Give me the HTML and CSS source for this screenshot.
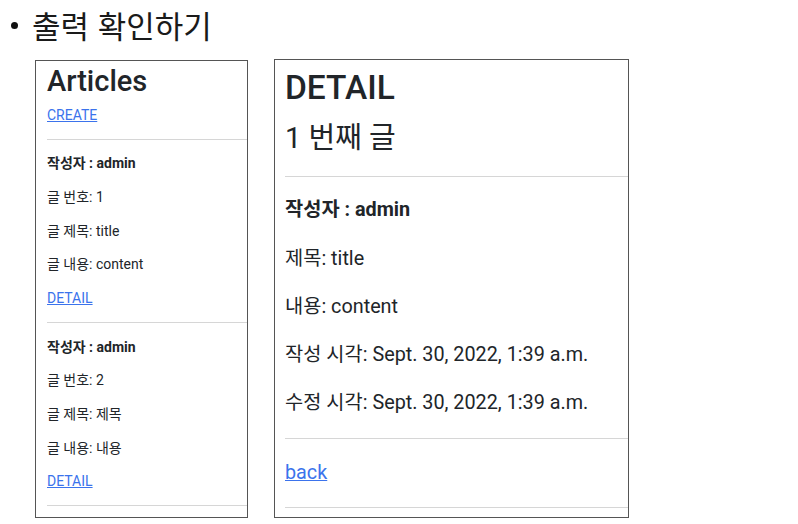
FILE: index.html
```html
<!DOCTYPE html>
<html lang="ko">
<head>
<meta charset="utf-8">
<title>출력 확인하기</title>
<link rel="stylesheet" href="styles.css">
</head>
<body>
<div class="page">
  <div class="title-row">
    <span class="bullet"></span>
    <span class="title">출력 확인하기</span>
  </div>
  <div class="shots">
    <div class="shot shot-list">
      <h1 class="list-h1">Articles</h1>
      <a class="link" href="#">CREATE</a>
      <hr class="rule">
      <p class="line"><b>작성자 : admin</b></p>
      <p class="line">글 번호: 1</p>
      <p class="line">글 제목: title</p>
      <p class="line">글 내용: content</p>
      <a class="link" href="#">DETAIL</a>
      <hr class="rule">
      <p class="line"><b>작성자 : admin</b></p>
      <p class="line">글 번호: 2</p>
      <p class="line">글 제목: 제목</p>
      <p class="line">글 내용: 내용</p>
      <a class="link" href="#">DETAIL</a>
      <hr class="rule">
    </div>
    <div class="shot shot-detail">
      <h1 class="detail-h1">DETAIL</h1>
      <h2 class="detail-h2">1 번째 글</h2>
      <hr class="rule rule-lg">
      <p class="line-lg"><b>작성자 : admin</b></p>
      <p class="line-lg">제목: title</p>
      <p class="line-lg">내용: content</p>
      <p class="line-lg">작성 시각: Sept. 30, 2022, 1:39 a.m.</p>
      <p class="line-lg">수정 시각: Sept. 30, 2022, 1:39 a.m.</p>
      <hr class="rule rule-lg">
      <a class="link" href="#">back</a>
      <hr class="rule rule-lg">
    </div>
  </div>
</div>
</body>
</html>
```
FILE: styles.css
```css
html, body {
  margin: 0;
  padding: 0;
  background: #ffffff;
}

.page {
  width: 798px;
  height: 524px;
  overflow: hidden;
  font-family: Roboto, "Noto Sans CJK KR", sans-serif;
  color: #212529;
}

.title-row {
  display: flex;
  align-items: center;
  height: 50px;
  padding-left: 11px;
}

.bullet {
  width: 7px;
  height: 7px;
  border-radius: 50%;
  background: #111;
  margin-right: 14px;
}

.title {
  font-family: "Noto Sans CJK KR", sans-serif;
  font-size: 31px;
  line-height: 36px;
  color: #1a1a1a;
}

.shots {
  display: flex;
  align-items: flex-start;
  margin-top: 9px;
  padding-left: 35px;
  gap: 26px;
}

.shot {
  box-sizing: border-box;
  border: 1px solid #555;
  overflow: hidden;
  background: #fff;
}

.shot-list {
  width: 213px;
  height: 458px;
  margin-top: 1px;
  padding: 1.5px 0 0 11px;
  font-size: 14px;
  line-height: 20.4px;
}

.shot-detail {
  width: 355px;
  height: 459px;
  padding: 8px 0 0 10px;
  font-size: 19.8px;
  line-height: 28.8px;
}

.list-h1 {
  margin: 0 0 6px;
  font-size: 29px;
  line-height: 36px;
  font-weight: 500;
}

.detail-h1 {
  margin: 0 0 12.8px;
  font-size: 33.5px;
  line-height: 40px;
  font-weight: 500;
}

.detail-h2 {
  margin: 0;
  font-size: 29px;
  line-height: 35px;
  font-weight: 400;
}

.link {
  color: #3b73ec;
  text-decoration: underline;
}

.rule {
  border: 0;
  border-top: 1px solid #d6d6d6;
  margin: 13.6px 0;
  height: 0;
}

.rule-lg {
  margin: 19.8px 0;
}

.line {
  margin: 0 0 13.3px;
}

.line-lg {
  margin: 0 0 19.4px;
}

b {
  font-weight: 700;
}
```
